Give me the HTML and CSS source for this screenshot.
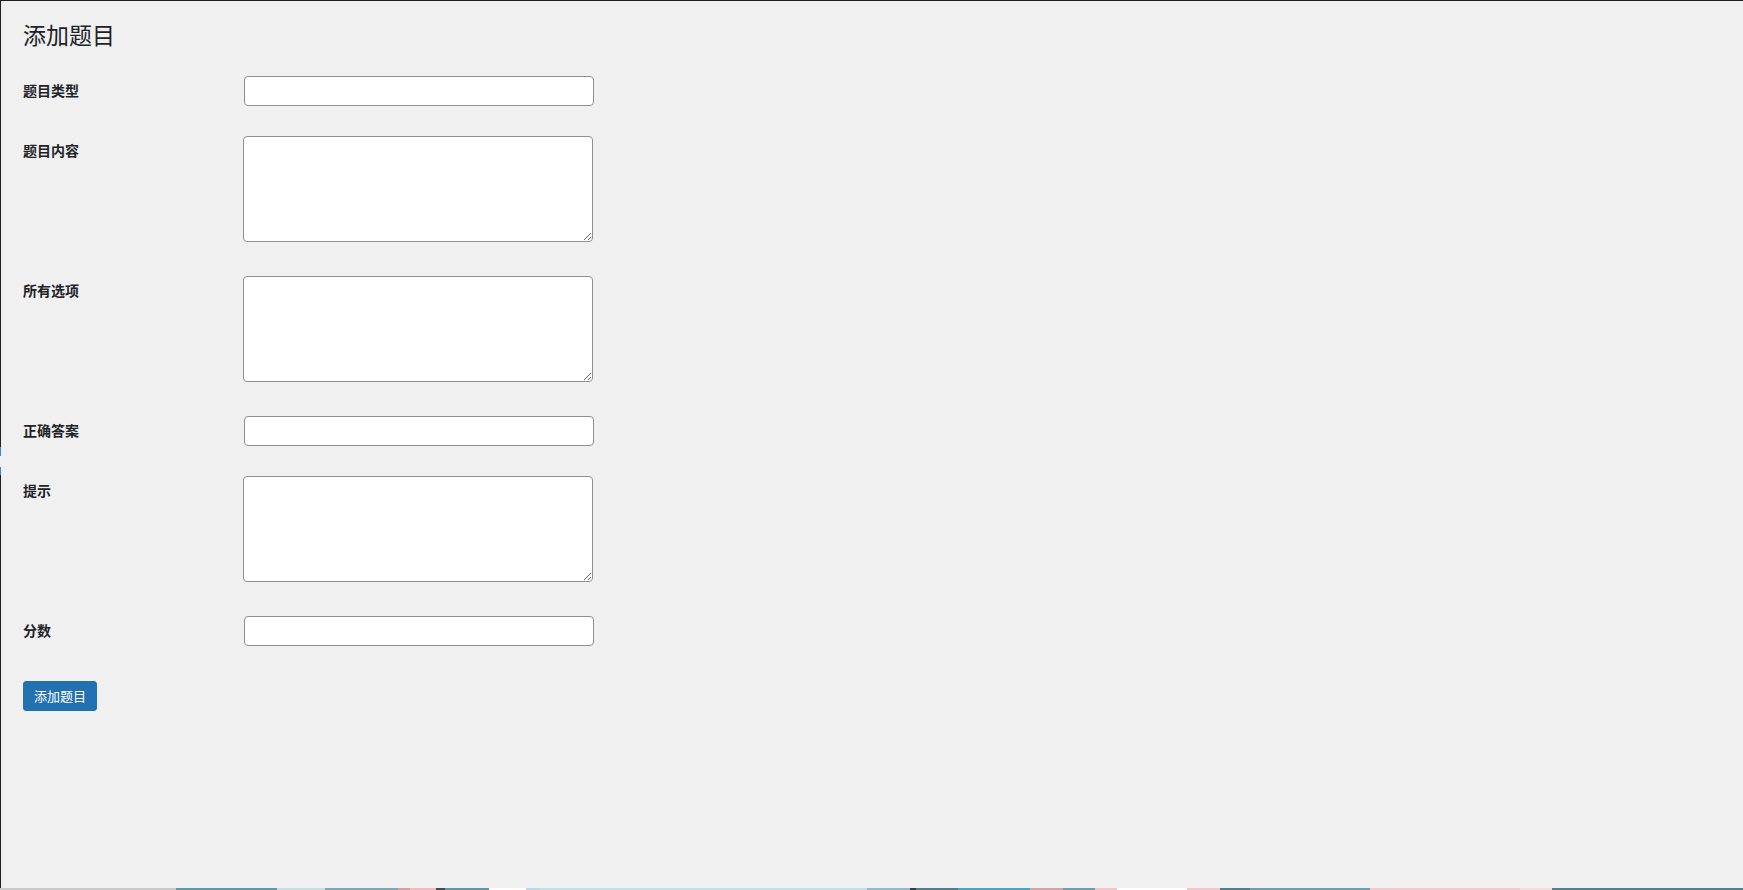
FILE: index.html
```html
<!DOCTYPE html>
<html lang="zh-CN">
<head>
<meta charset="utf-8">
<title>添加题目</title>
<link rel="stylesheet" href="styles.css">
</head>
<body>
<div class="frame">
  <div class="edge"></div>
  <div class="wrap">
    <h1 class="page-title">添加题目</h1>
    <form class="question-form">
      <table class="form-table">
        <tr>
          <th><label for="q-type">题目类型</label></th>
          <td><input id="q-type" class="regular-text" type="text"></td>
        </tr>
        <tr>
          <th><label for="q-content">题目内容</label></th>
          <td><textarea id="q-content" class="text-area" rows="5"></textarea></td>
        </tr>
        <tr>
          <th><label for="q-options">所有选项</label></th>
          <td><textarea id="q-options" class="text-area" rows="5"></textarea></td>
        </tr>
        <tr>
          <th><label for="q-answer">正确答案</label></th>
          <td><input id="q-answer" class="regular-text" type="text"></td>
        </tr>
        <tr>
          <th><label for="q-hint">提示</label></th>
          <td><textarea id="q-hint" class="text-area" rows="5"></textarea></td>
        </tr>
        <tr>
          <th><label for="q-score">分数</label></th>
          <td><input id="q-score" class="regular-text" type="text"></td>
        </tr>
      </table>
      <p class="submit"><button type="button" class="button-primary">添加题目</button></p>
    </form>
  </div>
</div>
<div class="strip"></div>
</body>
</html>
```

FILE: styles.css
```css
html, body {
  margin: 0;
  padding: 0;
  height: 890px;
  overflow: hidden;
  background: #ffffff;
}

body {
  font-family: "Noto Sans CJK SC", "Noto Sans", sans-serif;
  color: #1d2327;
  font-size: 14px;
  line-height: 1.4;
}

.frame {
  display: flex;
  height: 888px;
  box-sizing: border-box;
  border-top: 1px solid #1e1e1e;
  background: #f0f0f1;
}

.edge {
  width: 1px;
  flex: none;
  background: linear-gradient(to bottom,
    #1e1e1e 0, #1e1e1e 446px,
    #2d8fd0 446px, #2d8fd0 455px,
    #f0f0f1 455px, #f0f0f1 466px,
    #2d8fd0 466px, #2d8fd0 474px,
    #1e1e1e 474px, #1e1e1e 100%);
}

.wrap {
  flex: 1;
  margin: 10px 20px 0 22px;
}

.page-title {
  font-size: 23px;
  font-weight: 400;
  margin: 0;
  padding: 9px 0 4px;
  line-height: 1.3;
  color: #1d2327;
}

.question-form {
  margin: 0;
}

.form-table {
  border-collapse: collapse;
  margin-top: 7px;
  width: 100%;
  clear: both;
}

.form-table th {
  vertical-align: top;
  text-align: left;
  padding: 20px 10px 20px 0;
  width: 200px;
  line-height: 1.3;
  font-weight: 600;
  font-size: 14px;
  color: #1d2327;
}

.form-table td {
  vertical-align: top;
  padding: 15px 10px;
  line-height: 1.3;
  font-size: 14px;
}

.regular-text {
  box-sizing: border-box;
  width: 350px;
  min-height: 30px;
  height: 30px;
  margin: 0 1px;
  padding: 0 8px;
  font-family: inherit;
  font-size: 14px;
  line-height: 2;
  color: #2c3338;
  background: #ffffff;
  border: 1px solid #8c8f94;
  border-radius: 4px;
  box-shadow: 0 0 0 transparent;
  outline: none;
}

.text-area {
  box-sizing: border-box;
  width: 350px;
  margin: 0 0 1px;
  padding: 2px 6px;
  font-family: inherit;
  font-size: 14px;
  line-height: 1.42857143;
  color: #2c3338;
  background: #ffffff;
  border: 1px solid #8c8f94;
  border-radius: 4px;
  outline: none;
}

.submit {
  margin: 20px 0 0;
  padding: 0;
}

.button-primary {
  display: inline-block;
  box-sizing: border-box;
  min-height: 30px;
  margin: 0;
  padding: 0 10px;
  font-family: inherit;
  font-size: 13px;
  line-height: 2.15384615;
  color: #ffffff;
  background: #2271b1;
  border: 1px solid #2271b1;
  border-radius: 3px;
  cursor: pointer;
  white-space: nowrap;
}

.strip {
  height: 2px;
  background: linear-gradient(to right,
    #c9c9c9 0, #c9c9c9 176px,
    #5b9aa8 176px, #5b9aa8 277px,
    #c5dfe3 277px, #c5dfe3 325px,
    #7aa9b5 325px, #7aa9b5 398px,
    #d4a0a5 398px, #d4a0a5 410px,
    #f4b8bd 410px, #f4b8bd 436px,
    #3b4d57 436px, #3b4d57 445px,
    #5e97a5 445px, #5e97a5 489px,
    #ffffff 489px, #ffffff 526px,
    #b9d8ec 526px, #b9d8ec 540px,
    #c2e1e6 540px, #c2e1e6 867px,
    #8cbccb 867px, #8cbccb 910px,
    #2f3f48 910px, #2f3f48 916px,
    #4f7f8f 916px, #4f7f8f 958px,
    #41a9c3 958px, #41a9c3 1030px,
    #d4a3a8 1030px, #d4a3a8 1063px,
    #6a9fad 1063px, #6a9fad 1095px,
    #f5c6c9 1095px, #f5c6c9 1117px,
    #ffffff 1117px, #ffffff 1187px,
    #f5c6c9 1187px, #f5c6c9 1220px,
    #4f7f8f 1220px, #4f7f8f 1250px,
    #6a9fad 1250px, #6a9fad 1370px,
    #f6c7cb 1370px, #f6c7cb 1520px,
    #f5dcdd 1520px, #f5dcdd 1552px,
    #4e8191 1552px, #4e8191 100%);
}
```
